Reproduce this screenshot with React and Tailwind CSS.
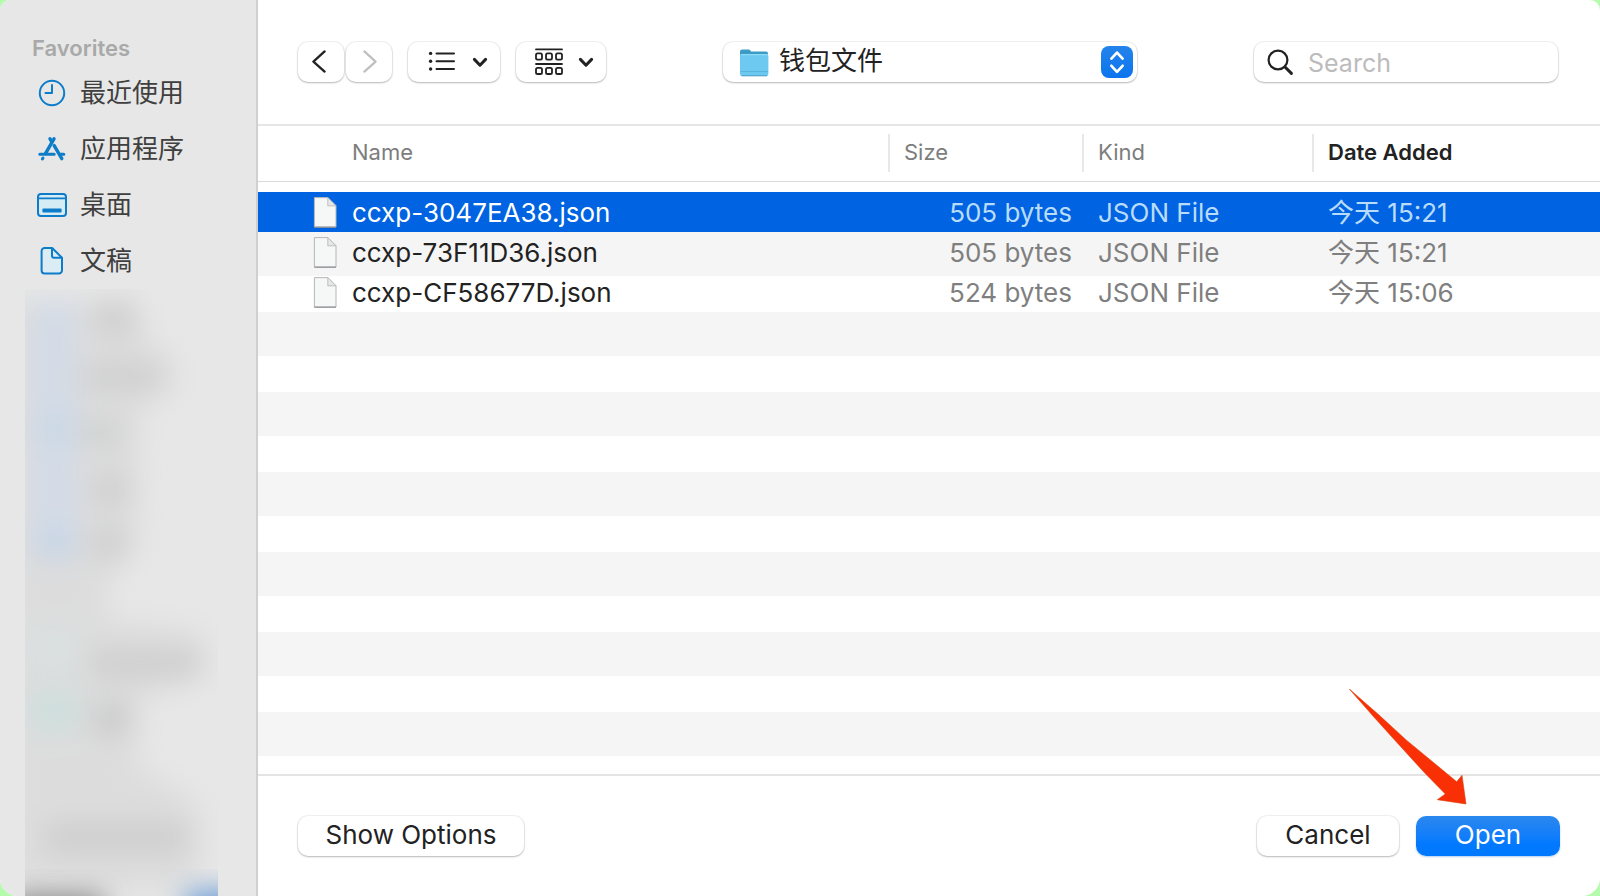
import { useState } from "react";

const files = [
  { name: "ccxp-3047EA38.json", size: "505 bytes", kind: "JSON File", added: "今天 15:21" },
  { name: "ccxp-73F11D36.json", size: "505 bytes", kind: "JSON File", added: "今天 15:21" },
  { name: "ccxp-CF58677D.json", size: "524 bytes", kind: "JSON File", added: "今天 15:06" },
];

const raised =
  "rounded-[10px] bg-white shadow-[0_0_0_1px_rgba(0,0,0,0.05),0_1px_2px_rgba(0,0,0,0.24)]";

function ClockIcon() {
  return (
    <svg width="30" height="30" viewBox="0 0 30 30" fill="none" stroke="#0d7dc9" strokeWidth="2" strokeLinecap="round" strokeLinejoin="round" aria-hidden="true">
      <circle cx="15" cy="15" r="12.2" />
      <path d="M15 7v8H8.5" />
    </svg>
  );
}

function AppsIcon() {
  return (
    <svg width="30" height="30" viewBox="0 0 30 30" fill="none" stroke="#0d7dc9" strokeWidth="3.4" strokeLinecap="round" aria-hidden="true">
      <path d="M17 4.8L8.6 19.4" />
      <path d="M13 4.8l1.8 3" />
      <path d="M17.2 11.6l7.6 13" />
      <path d="M6 24l-.6 1" strokeWidth="3" />
      <path d="M2.8 20.3h14.4M23.6 20.3h3.2" strokeWidth="3" />
    </svg>
  );
}

function DesktopIcon() {
  return (
    <svg width="30" height="30" viewBox="0 0 30 30" fill="none" stroke="#0d7dc9" strokeWidth="2" aria-hidden="true">
      <rect x="1" y="4" width="28" height="22" rx="3" fill="#d5ecf5" />
      <path d="M1 8.4h28" strokeWidth="1.6" />
      <rect x="5.4" y="18.6" width="19.2" height="3.8" rx="1" fill="#0d7dc9" stroke="none" />
    </svg>
  );
}

function DocumentIcon() {
  return (
    <svg width="30" height="30" viewBox="0 0 30 30" fill="none" stroke="#0d7dc9" strokeWidth="2" strokeLinejoin="round" aria-hidden="true">
      <path d="M7.6 2h7.6L25 11.8v12.6a3 3 0 0 1-3 3H7.6a3 3 0 0 1-3-3V5a3 3 0 0 1 3-3z" fill="#dcecf4" />
      <path d="M15 2.4v7.4a2 2 0 0 0 2 2h7.6" />
    </svg>
  );
}

const favorites = [
  { label: "最近使用", Icon: ClockIcon },
  { label: "应用程序", Icon: AppsIcon },
  { label: "桌面", Icon: DesktopIcon },
  { label: "文稿", Icon: DocumentIcon },
];

function RedactedItems() {
  return (
    <svg width="234" height="607" viewBox="0 0 234 607" className="block" aria-hidden="true">
      <defs>
        <filter id="soft" x="-50%" y="-50%" width="200%" height="200%">
          <feGaussianBlur stdDeviation="14" />
        </filter>
        <clipPath id="edge">
          <rect x="25" y="0" width="193" height="607" />
        </clipPath>
      </defs>
      <g clipPath="url(#edge)">
        <g filter="url(#soft)">
          <path d="M10 10H130L146 50 174 70 176 100 140 120 138 260 110 290 105 330 190 340 206 350 200 390 140 410 138 480 180 500 200 520 204 570 190 600H10z" fill="#dadada" fillOpacity="0.85" />
          <rect x="32" y="12" width="44" height="248" fill="#d0dbed" fillOpacity="0.7" />
          <rect x="34" y="126" width="42" height="28" fill="#c4d6ea" fillOpacity="0.6" />
          <rect x="34" y="240" width="42" height="30" fill="#c0d4ea" fillOpacity="0.7" />
          <rect x="30" y="340" width="44" height="36" fill="#dae4e5" fillOpacity="0.8" />
          <rect x="30" y="400" width="48" height="42" fill="#cae1df" fillOpacity="0.8" />
          <rect x="96" y="14" width="40" height="30" fill="#cacaca" fillOpacity="0.8" />
          <rect x="84" y="76" width="76" height="24" fill="#cacaca" fillOpacity="0.8" />
          <rect x="84" y="132" width="36" height="24" fill="#c9cdcb" fillOpacity="0.8" />
          <rect x="92" y="188" width="36" height="26" fill="#cacaca" fillOpacity="0.8" />
          <rect x="92" y="240" width="32" height="28" fill="#cacaca" fillOpacity="0.8" />
          <rect x="90" y="362" width="112" height="26" fill="#cacaca" fillOpacity="0.8" />
          <rect x="94" y="414" width="34" height="32" fill="#c6c6c6" fillOpacity="0.8" />
          <rect x="46" y="534" width="140" height="30" fill="#cacaca" fillOpacity="0.8" />
        </g>
        <g filter="url(#soft)">
          <rect x="10" y="606" width="94" height="40" fill="#858585" />
          <rect x="186" y="602" width="80" height="40" fill="#6b9bd6" />
        </g>
      </g>
    </svg>
  );
}

function Sidebar() {
  return (
    <aside className="flex w-[258px] shrink-0 flex-col overflow-hidden border-r-2 border-[#d0d0d0] bg-[#e7e7e7] pt-9">
      <h2 className="pl-8 text-[22px] leading-6 font-semibold text-[#a9a9a9]">Favorites</h2>
      <nav className="mt-[5px]">
        <ul>
          {favorites.map(({ label, Icon }) => (
            <li key={label}>
              <a href="#" className="flex h-14 items-center gap-[13px] pl-[37px] text-[26px] leading-8 text-[#3f3f3f]">
                <Icon />
                <span>{label}</span>
              </a>
            </li>
          ))}
        </ul>
      </nav>
      <RedactedItems />
    </aside>
  );
}

function Chevron() {
  return (
    <svg width="16" height="12" viewBox="0 0 16 12" fill="none" stroke="#222" strokeWidth="3" strokeLinecap="round" strokeLinejoin="round" aria-hidden="true">
      <path d="M2.4 3.4L8 9.2 13.6 3.4" />
    </svg>
  );
}

function Toolbar() {
  return (
    <header className="flex h-[124px] items-center justify-between pr-[42px] pl-10">
      <div className="flex items-center gap-4">
        <div className="flex gap-[2px]">
          <button aria-label="Back" className={`flex h-10 w-[46px] items-center justify-center ${raised}`}>
            <svg width="24" height="24" viewBox="0 0 24 24" fill="none" stroke="#222" strokeWidth="2.3" strokeLinecap="round" strokeLinejoin="round">
              <path d="M15.6 1.4L4.4 11.6l11.2 10" />
            </svg>
          </button>
          <button aria-label="Forward" className={`flex h-10 w-[46px] items-center justify-center ${raised}`}>
            <svg width="24" height="24" viewBox="0 0 24 24" fill="none" stroke="#bfbfbf" strokeWidth="2.2" strokeLinecap="round" strokeLinejoin="round">
              <path d="M7.4 1.4l11.2 10.2L7.4 21.6" />
            </svg>
          </button>
        </div>
        <button aria-label="List view" className={`flex h-10 w-[92px] items-center justify-between pr-[12px] pl-5 ${raised}`}>
          <svg width="28" height="22" viewBox="0 0 28 22" fill="none" stroke="#222" strokeWidth="2" strokeLinecap="round" aria-hidden="true">
            <path d="M8.5 2.4H26M8.5 10.2H26M8.5 18H26" />
            <g fill="#222" stroke="none">
              <circle cx="2.6" cy="2.4" r="1.7" />
              <circle cx="2.6" cy="10.2" r="1.7" />
              <circle cx="2.6" cy="18" r="1.7" />
            </g>
          </svg>
          <Chevron />
        </button>
        <button aria-label="Group items" className={`flex h-10 w-[90px] items-center justify-between pr-[12px] pl-[18px] ${raised}`}>
          <svg width="30" height="28" viewBox="0 0 30 28" fill="none" stroke="#222" strokeWidth="1.8" strokeLinecap="round" aria-hidden="true">
            <path d="M2 1.4h26M2 16h26" />
            <rect x="2" y="5.4" width="6" height="6.2" rx="1.6" />
            <rect x="12" y="5.4" width="6" height="6.2" rx="1.6" />
            <rect x="22" y="5.4" width="6" height="6.2" rx="1.6" />
            <rect x="2" y="19.8" width="6" height="6.2" rx="1.6" />
            <rect x="12" y="19.8" width="6" height="6.2" rx="1.6" />
            <rect x="22" y="19.8" width="6" height="6.2" rx="1.6" />
          </svg>
          <Chevron />
        </button>
      </div>

      <div className="relative w-[414px]">
        <select aria-label="Folder" className={`block h-10 w-full appearance-none pb-[2px] pl-[56px] text-[26px] leading-9 text-[#222] ${raised}`}>
          <option>钱包文件</option>
        </select>
        <svg className="pointer-events-none absolute top-[6px] left-4" width="30" height="30" viewBox="0 0 30 30" aria-hidden="true">
          <path d="M1 3.6A2 2 0 0 1 3 1.6h6.4c1 0 1.4.3 2 1l.8 1H27a2 2 0 0 1 2 2V12H1z" fill="#3c9cc6" />
          <rect x="1" y="6" width="28.4" height="22" rx="2" fill="#6dc9f0" />
          <path d="M1.6 6.6h27.2" stroke="#8edaf7" strokeWidth="1.2" />
          <path d="M1.4 23.6h27.6" stroke="#5ab2d9" strokeWidth="1" />
          <path d="M2.4 27.8h25.6" stroke="#4c9fc4" strokeWidth="1" />
        </svg>
        <svg className="pointer-events-none absolute top-1 right-1" width="32" height="32" viewBox="0 0 32 32" fill="none" aria-hidden="true">
          <defs>
            <linearGradient id="stepper" x1="0" y1="0" x2="0" y2="1">
              <stop offset="0" stopColor="#2584ea" />
              <stop offset="1" stopColor="#0b74ef" />
            </linearGradient>
          </defs>
          <rect width="32" height="32" rx="8" fill="url(#stepper)" />
          <path d="M10.4 12.6L16 6.6l5.6 6M10.4 19.8l5.6 6 5.6-6" stroke="#fff" strokeWidth="2.7" strokeLinecap="round" strokeLinejoin="round" />
        </svg>
      </div>

      <label className={`flex h-10 w-[304px] items-center gap-[14px] pt-[2px] pl-3 ${raised}`}>
        <svg width="28" height="28" viewBox="0 0 28 28" fill="none" stroke="#222" aria-hidden="true">
          <circle cx="12" cy="11" r="9.4" strokeWidth="2.2" />
          <path d="M19 18l6.4 6.4" strokeWidth="3" strokeLinecap="round" />
        </svg>
        <input type="search" aria-label="Search" placeholder="Search" className="w-0 flex-1 bg-transparent text-[25px] leading-9 outline-none placeholder:text-[#bcbcbc]" />
      </label>
    </header>
  );
}

function FileIcon() {
  return (
    <svg width="24" height="32" viewBox="0 0 24 32" aria-hidden="true">
      <path d="M1.4 0.6h13.4L23 8.8V30H1.4z" fill="#f6f7f7" stroke="#b4b6b8" strokeWidth="1" />
      <path d="M14.8 0.6v8.2H23z" fill="#e6e8e8" stroke="#b9bbbc" strokeWidth="0.9" strokeLinejoin="round" />
      <path d="M1.4 30.2H23" stroke="#8f9295" strokeWidth="1.2" />
    </svg>
  );
}

function HeaderCell({ children, divided, className = "", width = "" }) {
  return (
    <th scope="col" className={`bg-white p-0 pb-[10px] text-left text-[22px] leading-7 font-normal ${width}`}>
      <div className="flex h-[58px] items-center border-t-2 border-b border-t-[#e6e6e6] border-b-[#d9d9d9] pb-[2px]">
        <span className={`flex h-[38px] items-center pb-[2px] ${divided ? "border-l-2 border-[#e8e8e8] pl-[14px]" : "pl-[94px]"} ${className}`}>
          {children}
        </span>
      </div>
    </th>
  );
}

function FileList() {
  const [selected, setSelected] = useState(0);
  return (
    <section className="flex-1 bg-[linear-gradient(#f5f5f5_4px,#fff_4px,#fff_40px,#f5f5f5_40px)] bg-[length:100%_80px] bg-[position:0_68px]">
      <table className="w-full table-fixed border-collapse text-[26px] leading-8">
        <thead>
          <tr>
            <HeaderCell className="text-[#7d7d7d]">Name</HeaderCell>
            <HeaderCell divided width="w-[194px]" className="text-[#7d7d7d]">Size</HeaderCell>
            <HeaderCell divided width="w-[230px]" className="text-[#7d7d7d]">Kind</HeaderCell>
            <HeaderCell divided width="w-[288px]" className="font-semibold text-[#222]">Date Added</HeaderCell>
          </tr>
        </thead>
        <tbody>
          {files.map((file, i) => {
            const active = i === selected;
            const detail = active ? "text-[#b9dcfb]" : "text-[#7f7f7f]";
            return (
              <tr key={file.name} aria-selected={active} onClick={() => setSelected(i)} className={active ? "h-10 bg-[#0063e1]" : "h-10"}>
                <td className={`p-0 pt-[2px] ${active ? "text-white" : "text-[#222]"}`}>
                  <div className="flex items-center gap-[15px] pl-[55px]">
                    <FileIcon />
                    <span>{file.name}</span>
                  </div>
                </td>
                <td className={`p-0 pt-[2px] pr-[10px] text-right ${detail}`}>{file.size}</td>
                <td className={`p-0 pt-[2px] pl-4 ${detail}`}>{file.kind}</td>
                <td className={`p-0 pt-[2px] pl-4 ${detail}`}>{file.added}</td>
              </tr>
            );
          })}
        </tbody>
      </table>
    </section>
  );
}

function Footer() {
  return (
    <footer className="flex h-[122px] items-center justify-between border-t-2 border-[#e4e4e4] pr-10 pl-10 text-[26px] leading-8 text-[#222]">
      <button className={`h-10 w-[226px] pb-[2px] ${raised}`}>Show Options</button>
      <div className="flex gap-[17px]">
        <button className={`h-10 w-[142px] pb-[2px] ${raised}`}>Cancel</button>
        <div className="relative">
          <button className="h-10 w-[144px] rounded-[10px] bg-linear-to-b from-[#2a88ee] to-[#0179ff] to-70% pb-[2px] text-white shadow-[0_1px_2px_rgba(0,90,200,0.3)]">Open</button>
          <svg className="pointer-events-none absolute bottom-[51px] left-[-67px]" width="118" height="116" viewBox="0 0 118 116" aria-hidden="true">
            <path d="M0.3 0L30 26 57.7 51.4 107.7 92.7 113 86.3 117 115 88.3 110.7 96.3 105 76 84.3 44.3 49.5 24 27z" fill="#f92f06" stroke="#d9420f" strokeWidth="0.6" />
          </svg>
        </div>
      </div>
    </footer>
  );
}

export default function App() {
  return (
    <div className="min-h-screen bg-[#b4fbab] font-['Inter','Noto_Sans_CJK_SC',sans-serif]">
      <div className="flex min-h-screen overflow-hidden rounded-t-[10px] rounded-b-[18px] bg-white">
        <Sidebar />
        <main className="flex min-w-0 flex-1 flex-col">
          <Toolbar />
          <FileList />
          <Footer />
        </main>
      </div>
    </div>
  );
}
